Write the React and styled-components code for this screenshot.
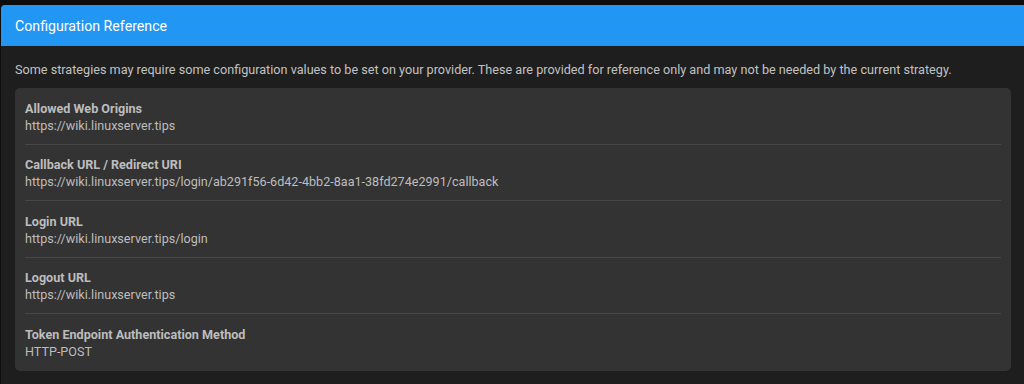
import React from "react";
import styled, { createGlobalStyle } from "styled-components";

const GlobalStyle = createGlobalStyle`
  html, body {
    margin: 0;
    padding: 0;
    background: #0d0d0d;
    font-family: Roboto, "Noto Sans", sans-serif;
  }
  #root {
    padding: 5px 0 0 1px;
  }
`;

const entries = [
  { label: "Allowed Web Origins", value: "https://wiki.linuxserver.tips" },
  {
    label: "Callback URL / Redirect URI",
    value:
      "https://wiki.linuxserver.tips/login/ab291f56-6d42-4bb2-8aa1-38fd274e2991/callback",
  },
  { label: "Login URL", value: "https://wiki.linuxserver.tips/login" },
  { label: "Logout URL", value: "https://wiki.linuxserver.tips" },
  { label: "Token Endpoint Authentication Method", value: "HTTP-POST" },
];

function App() {
  return (
    <>
      <GlobalStyle />
      <Card>
        <Header>Configuration Reference</Header>
        <Body>
          <Intro>
            Some strategies may require some configuration values to be set on
            your provider. These are provided for reference only and may not be
            needed by the current strategy.
          </Intro>
          <Panel>
            {entries.map((e, i) => (
              <Row key={e.label} last={i === entries.length - 1}>
                <Label>{e.label}</Label>
                <Value>{e.value}</Value>
              </Row>
            ))}
          </Panel>
        </Body>
      </Card>
    </>
  );
}

export default App;

const Card = styled.div`
  background: #1e1e1e;
  border-radius: 4px 0 0 0;
  overflow: hidden;
  min-height: 379px;
`;

const Header = styled.div`
  height: 41px;
  display: flex;
  align-items: center;
  padding: 0 14px;
  background: #2196f3;
  color: #ffffff;
  font-size: 14.2px;
`;

const Body = styled.div`
  padding: 15px 13px 0 14px;
`;

const Intro = styled.div`
  font-size: 12.65px;
  line-height: 18px;
  color: #c2c2c2;
  margin-bottom: 9px;
`;

const Panel = styled.div`
  background: #333333;
  border-radius: 5px;
  padding: 0 0 1px;
`;

const Row = styled.div`
  margin: 0 10px;
  padding: 12.5px 0 9.5px;
  border-bottom: ${(p) => (p.last ? "none" : "1px solid #474747")};
`;

const Label = styled.div`
  font-size: 12.6px;
  font-weight: 700;
  line-height: 16px;
  color: #bdbdbd;
`;

const Value = styled.div`
  font-size: 12.6px;
  line-height: 17.5px;
  color: #bdbdbd;
`;
